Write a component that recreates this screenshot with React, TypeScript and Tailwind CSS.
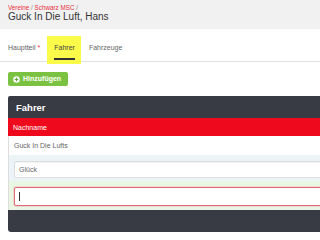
import React from "react";

export default function App() {
  return (
    <div className="w-[320px] h-[240px] overflow-hidden bg-white font-['Liberation_Sans',Arial,sans-serif]">
      <div className="h-[29px] bg-[#f1f1f1] px-2 pt-[4px]">
        <div className="text-[6.3px] leading-[7px] whitespace-nowrap">
          <span className="text-[#e8303c]">Vereine</span>
          <span className="text-[#888]"> / </span>
          <span className="text-[#e8303c]">Schwarz MSC</span>
          <span className="text-[#888]"> /</span>
        </div>
        <div className="text-[10px] leading-[12px] text-[#333] whitespace-nowrap">Guck In Die Luft, Hans</div>
      </div>

      <div className="flex border-b border-[#e2e2e2] pl-2 gap-[14px] text-[7px] leading-[9px]">
        <div className="pt-[14px] pb-[9px] text-[#666] whitespace-nowrap">
          Hauptteil <span className="text-[#e8303c]">*</span>
        </div>
        <div className="relative pt-[14px] pb-[9px] text-[#444] whitespace-nowrap">
          <div className="absolute left-[-7px] top-[7px] w-[34px] h-[28px] bg-[#fbfb4a]" />
          <span className="relative">Fahrer</span>
          <div className="absolute left-0 right-0 bottom-[1px] h-[2px] bg-[#333]" />
        </div>
        <div className="pt-[14px] pb-[9px] text-[#666] whitespace-nowrap">Fahrzeuge</div>
      </div>

      <div className="pl-2 mt-[10px]">
        <div className="flex items-center w-[60px] h-[14px] rounded-[2px] bg-[#7cc242] pl-[5px] gap-[3px]">
          <svg width="7" height="7" viewBox="0 0 14 14">
            <circle cx="7" cy="7" r="6.5" fill="#ffffff" />
            <path d="M7 3.5v7M3.5 7h7" stroke="#5aa836" strokeWidth="2.2" />
          </svg>
          <span className="text-[7px] leading-[8px] font-bold text-white whitespace-nowrap">Hinzufügen</span>
        </div>
      </div>

      <div className="ml-2 mt-[10px] w-[360px]">
        <div className="h-[22px] bg-[#383a44] rounded-tl-[2px] flex items-center pl-[8px]">
          <span className="text-[9.5px] font-bold text-white leading-[11px]">Fahrer</span>
        </div>
        <div className="h-[18px] bg-[#ee0a1c] flex items-center pl-[5px]">
          <span className="text-[7px] leading-[9px] text-white">Nachname</span>
        </div>
        <div className="border-l border-[#dddddd]">
          <div className="h-[19px] bg-white flex items-center pl-[5px]">
            <span className="text-[7px] leading-[9px] text-[#666]">Guck In Die Lufts</span>
          </div>
          <div className="h-[26px] bg-[#edf4f7] pl-[5px] pt-[6px]">
            <div className="h-[17px] bg-white border border-[#dcdcdc] rounded-[2px] flex items-center pl-[4px] shadow-[inset_0_1px_1px_rgba(0,0,0,0.05)]">
              <span className="text-[7px] leading-[9px] text-[#666]">Glück</span>
            </div>
          </div>
          <div className="h-[29px] bg-[#e8f6e3] pl-[5px] pt-[6px]">
            <div className="h-[19px] bg-white border border-[#e06d75] rounded-[2px] flex items-center pl-[4px] shadow-[0_0_0_1px_rgba(240,160,165,0.35)]">
              <div className="w-[1px] h-[9px] bg-[#333]" />
            </div>
          </div>
        </div>
        <div className="h-[22px] bg-[#383a44] rounded-bl-[3px]" />
      </div>
    </div>
  );
}
